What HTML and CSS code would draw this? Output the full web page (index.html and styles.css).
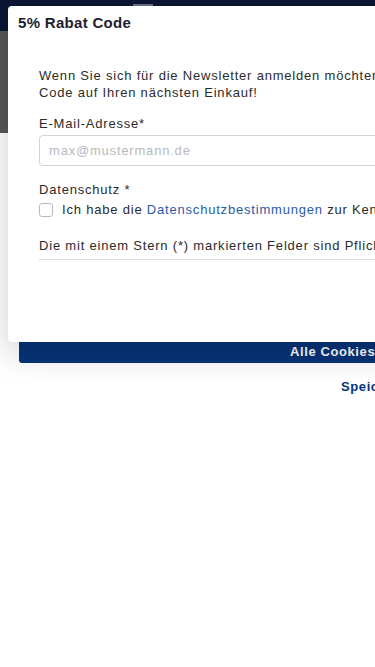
FILE: index.html
```html
<!DOCTYPE html>
<html lang="de">
<head>
    <meta charset="UTF-8">
    <meta name="viewport" content="width=device-width, initial-scale=1.0">
    <title>5% Rabat Code</title>
    <link rel="stylesheet" href="styles.css">
</head>
<body>
    <div class="seite">
        <div class="kopf"><span class="kopf-strich"></span></div>
        <div class="abgedunkelt"></div>
        <div class="cookie-banner">
            <button class="cookie-alle">Alle Cookies akzeptieren</button>
            <a class="cookie-speichern" href="#">Speichern</a>
        </div>
    </div>

    <div class="modal">
        <div class="modal-kopf">5% Rabat Code</div>
        <div class="modal-inhalt">
            <p class="intro">Wenn Sie sich für die Newsletter anmelden möchten, erhalten Sie einen 5% Rabatt Code auf Ihren nächsten Einkauf!</p>
            <label class="feld-label" for="email">E-Mail-Adresse*</label>
            <input class="eingabe" id="email" type="email" placeholder="max@mustermann.de">
            <div class="feld-label abstand">Datenschutz *</div>
            <label class="check-zeile">
                <span class="checkbox"></span>
                <span>Ich habe die <a href="#">Datenschutzbestimmungen</a> zur Kenntnis genommen.</span>
            </label>
            <p class="hinweis">Die mit einem Stern (*) markierten Felder sind Pflichtfelder.</p>
        </div>
    </div>
</body>
</html>
```

FILE: styles.css
```css
html, body {
    margin: 0;
    padding: 0;
    overflow: hidden;
    height: 667px;
    background-color: #ffffff;
    font-family: "Liberation Sans", Arial, sans-serif;
}
.seite {
    width: 375px;
}
.kopf {
    height: 31px;
    background-color: #0b1733;
    position: relative;
}
.kopf-strich {
    position: absolute;
    left: 133px;
    top: 4px;
    width: 20px;
    height: 2px;
    background-color: #6b7080;
}
.abgedunkelt {
    height: 102px;
    background-color: #575757;
}
.cookie-banner {
    background-color: #ffffff;
    border-radius: 10px 10px 0 0;
    padding: 196px 0 0 19px;
    height: 400px;
    white-space: nowrap;
    overflow: hidden;
}
.cookie-alle {
    display: block;
    width: 420px;
    height: 34px;
    background-color: #06347a;
    color: #ffffff;
    border: none;
    border-radius: 3px;
    font-family: inherit;
    font-weight: bold;
    font-size: 13px;
    letter-spacing: 0.6px;
    text-align: left;
    padding: 12px 0 0 271px;
    line-height: 18px;
}
.cookie-speichern {
    display: block;
    margin: 16px 0 0 322px;
    color: #06347a;
    font-weight: bold;
    font-size: 13px;
    letter-spacing: 0.6px;
    text-decoration: none;
}
.modal {
    position: absolute;
    left: 8px;
    top: 6px;
    width: 460px;
    height: 336px;
    background-color: #ffffff;
    border-radius: 4px;
    box-shadow: 0 10px 34px rgba(0, 0, 0, 0.2);
    white-space: nowrap;
    overflow: hidden;
}
.modal-kopf {
    padding: 7px 10px 0 10px;
    height: 30px;
    line-height: 20px;
    font-size: 15px;
    font-weight: bold;
    color: #1c1e2e;
    letter-spacing: 0.3px;
}
.modal-inhalt {
    padding: 0 0 0 31px;
    color: #2b2b2b;
    font-size: 13px;
    letter-spacing: 0.8px;
    line-height: 17px;
}
.intro {
    margin: 24px 0 0 0;
    white-space: normal;
    width: 562px;
}
.feld-label {
    display: block;
    margin-top: 14px;
}
.feld-label.abstand {
    margin-top: 15px;
}
.eingabe {
    display: block;
    box-sizing: border-box;
    margin-top: 3px;
    width: 420px;
    height: 31px;
    border: 1px solid #d4d4d8;
    border-radius: 4px;
    padding: 0 9px;
    font-family: inherit;
    font-size: 13px;
    letter-spacing: 0.8px;
    color: #2b2b2b;
}
.eingabe::placeholder {
    color: #b9b9bd;
}
.check-zeile {
    display: flex;
    align-items: center;
    gap: 9px;
    margin-top: 3px;
}
.checkbox {
    flex-shrink: 0;
    box-sizing: border-box;
    width: 14px;
    height: 14px;
    border: 1px solid #b9b9bd;
    border-radius: 3px;
    background-color: #ffffff;
}
.check-zeile a {
    color: #2a5aa6;
    text-decoration: none;
}
.hinweis {
    margin: 19px 0 0 0;
    padding-bottom: 5px;
    border-bottom: 1px solid #dcdce0;
}
```
